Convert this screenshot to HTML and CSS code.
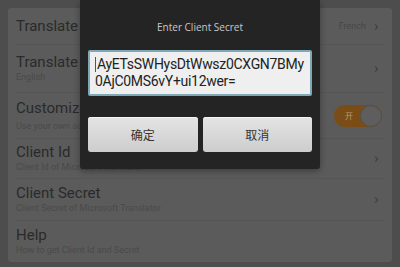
FILE: index.html
```html
<!DOCTYPE html>
<html>
<head>
<meta charset="utf-8">
<link rel="stylesheet" href="styles.css">
</head>
<body>
<div class="screen">
  <div class="card">
    <div class="row">
      <div class="texts"><div class="title">Translate From</div></div>
      <div class="value">French</div>
      <span class="chev">›</span>
    </div>
    <div class="row">
      <div class="texts"><div class="title">Translate To</div><div class="sub">English</div></div>
      <span class="chev">›</span>
    </div>
    <div class="row">
      <div class="texts"><div class="title">Customized</div><div class="sub gap">Use your own account</div></div>
      <div class="toggle"><span class="tlabel">开</span><span class="knob"></span></div>
    </div>
    <div class="row">
      <div class="texts"><div class="title">Client Id</div><div class="sub">Client Id of Microsoft Translator</div></div>
      <span class="chev">›</span>
    </div>
    <div class="row">
      <div class="texts"><div class="title">Client Secret</div><div class="sub">Client Secret of Microsoft Translator</div></div>
      <span class="chev">›</span>
    </div>
    <div class="row last">
      <div class="texts"><div class="title">Help</div><div class="sub">How to get Client Id and Secret</div></div>
    </div>
  </div>
  <div class="dialog">
    <div class="dtitle">Enter Client Secret</div>
    <div class="input"><span class="caret"></span>AyETsSWHysDtWwsz0CXGN7BMy<br>0AjC0MS6vY+ui12wer=</div>
    <div class="buttons">
      <div class="btn">确定</div>
      <div class="btn">取消</div>
    </div>
  </div>
</div>
</body>
</html>
```
FILE: styles.css
```css
* { box-sizing: border-box; }
html, body { margin: 0; padding: 0; }
body { width: 400px; height: 267px; overflow: hidden; background: #4d4d4d; font-family: Roboto, "Open Sans", "Noto Sans CJK SC", sans-serif; }
.screen { position: relative; width: 400px; height: 267px; padding: 8px 8px 5px 8px; }
.card { background: #5b5b5b; height: 254px; border-radius: 3px; padding: 0 8px; display: flex; flex-direction: column; }
.row { display: flex; align-items: center; border-bottom: 1px solid #555; }
.row:nth-child(1) { height: 37px; }
.row:nth-child(2) { height: 48px; }
.row:nth-child(3) { height: 46px; }
.row:nth-child(4) { height: 40px; }
.row:nth-child(5) { height: 42px; }
.row.last { border-bottom: none; flex: 1; }
.texts { flex: 1; display: flex; flex-direction: column; }
.title { color: #2a2a2a; font-size: 15px; line-height: 17px; }
.sub { color: #4a4a4a; font-size: 9px; line-height: 12px; }
.sub.gap { margin-top: 3px; }
.value { color: #474747; font-size: 9px; margin-right: 8px; }
.chev { color: #3e3e3e; font-size: 15px; line-height: 15px; width: 8px; margin-right: 2px; }
.toggle { width: 48px; height: 22px; border-radius: 11px; background: #7b4d16; position: relative; margin-right: 2px; display: flex; align-items: center; }
.tlabel { color: #b49a7a; font-size: 8px; margin-left: 11px; font-family: "Noto Sans CJK SC", sans-serif; }
.knob { position: absolute; right: 0; top: 0; width: 22px; height: 22px; border-radius: 50%; background: #5e5e5e; border: 1px solid #505050; }
.dialog { position: absolute; left: 80px; top: 0; width: 240px; height: 169px; background: #242424; border-radius: 0 0 3px 3px; box-shadow: 0 2px 6px rgba(0,0,0,0.35); padding: 0 8px; display: flex; flex-direction: column; }
.dtitle { color: #c8c8c8; font-size: 10px; text-align: center; margin-top: 20px; height: 14px; line-height: 14px; font-family: "Open Sans", sans-serif; }
.input { margin-top: 16px; height: 46px; background: #efefef; border: 2px solid #7fa8b6; border-radius: 2px; color: #222; font-size: 14px; line-height: 17px; padding: 4px 2px 0 5px; white-space: nowrap; overflow: hidden; letter-spacing: -0.3px; }
.caret { display: inline-block; width: 1px; height: 15px; background: #555; vertical-align: -3px; margin-right: 1px; }
.buttons { display: flex; gap: 5px; margin-top: 21px; }
.btn { flex: 1; height: 35px; border-radius: 3px; background: linear-gradient(#e4e4e4, #cdcdcd); color: #333; font-size: 12px; display: flex; align-items: center; justify-content: center; font-family: "Noto Sans CJK SC", sans-serif; box-shadow: inset 0 1px 0 #f4f4f4; }
```
